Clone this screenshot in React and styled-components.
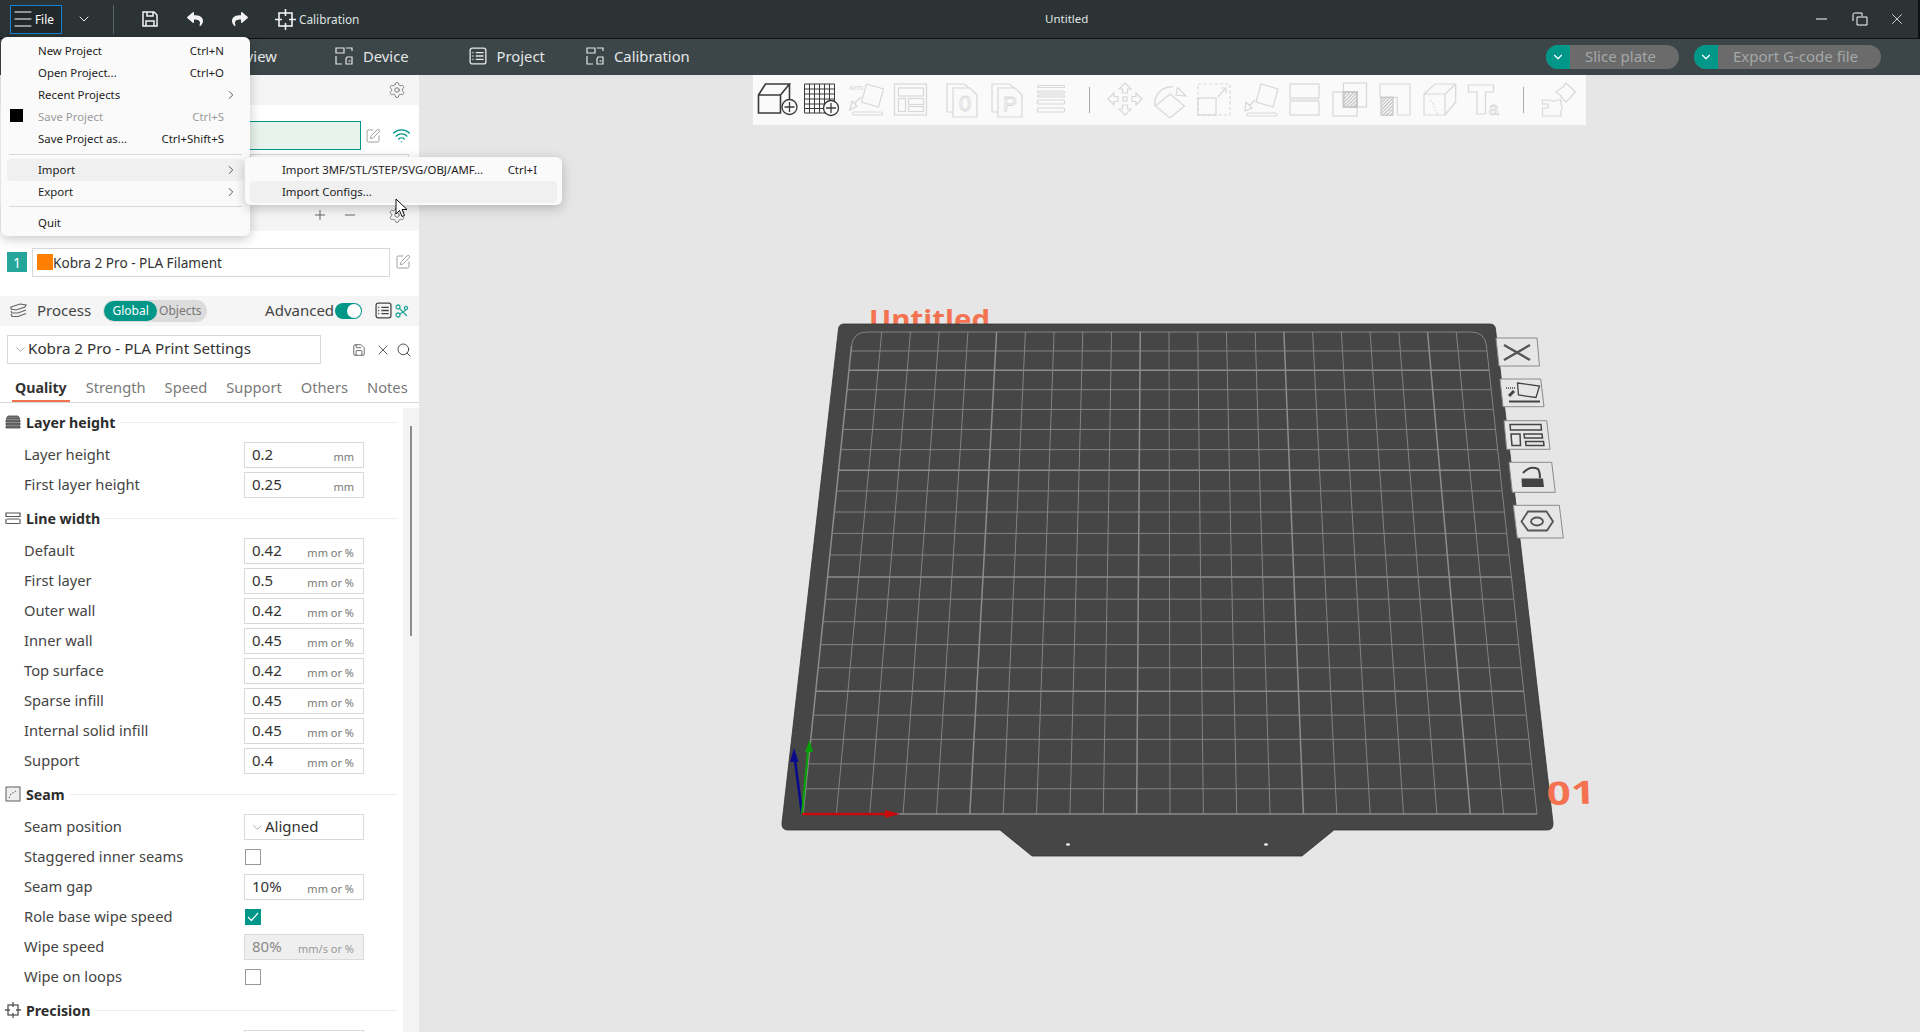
import React from 'react';
import styled, { createGlobalStyle } from 'styled-components';
import { ChevronDown, ChevronRight, Menu as MenuIcon, Minus, Plus, Save, Search, Settings, SquarePen, Wifi, X } from 'lucide-react';
import { FaReply, FaShare } from 'react-icons/fa';

const Global = createGlobalStyle`
  html, body { margin: 0; padding: 0; height: 100%; overflow: hidden; background: #e6e6e6; }
  * { box-sizing: border-box; }
  body { font-family: "Noto Sans", "Liberation Sans", sans-serif; }
`;

const Shell = styled.div`
  width: 1920px;
  height: 1032px;
  display: flex;
  flex-direction: column;
  position: relative;
  overflow: hidden;
`;

/* title bar */
const TitleBar = styled.div`
  height: 39px;
  flex: none;
  display: flex;
  align-items: center;
  background: #2b3335;
  border-bottom: 1px solid #0e1213;
  border-right: 2px solid #0e1213;
  color: #fff;
  padding-left: 10px;
  position: relative;
`;

const FileButton = styled.div`
  width: 52px;
  height: 29px;
  display: flex;
  align-items: center;
  background: #20282a;
  border: 1px solid #1283d8;
  font-size: 11.8px;
  color: #fff;
`;

const TitleIcon = styled.span`
  display: flex;
  align-items: center;
  justify-content: center;
  margin-left: ${p => p.$ml}px;
  color: #f2f2f2;
`;

const TitleSep = styled.div`
  width: 1px;
  height: 29px;
  background: #5a6366;
  margin-left: 21px;
`;

const CalibText = styled.span`
  font-size: 11.8px;
  color: #dfe2e3;
  margin-left: 3px;
`;

const DocTitle = styled.span`
  position: absolute;
  left: 1045px;
  font-size: 11.5px;
  color: #e3e6e6;
  padding-bottom: 2px;
`;

const WinControls = styled.div`
  margin-left: auto;
  display: flex;
  align-items: center;
  gap: 20px;
  padding-right: 12.5px;
`;

/* nav bar */
const NavBar = styled.div`
  height: 36px;
  flex: none;
  display: flex;
  align-items: center;
  background: #3c4547;
  padding: 0 0 2px 195px;
  color: #e4e7e7;
`;

const NavTab = styled.div`
  width: ${p => p.$w}px;
  display: flex;
  align-items: center;
  gap: 10px;
  font-size: 14.8px;
`;

const NavActions = styled.div`
  margin: 2px 0 0 auto;
  display: flex;
  gap: 15px;
  padding-right: 39px;
`;

const SplitButton = styled.div`
  width: ${p => p.$w}px;
  height: 24px;
  display: flex;
  align-items: center;
  border-radius: 12px;
  overflow: hidden;
  background: #6b6b6b;
  color: #a3a8aa;
  font-size: 15px;
`;

const SplitLabel = styled.span`
  padding-bottom: 3px;
`;

const SplitCaret = styled.span`
  width: 24px;
  height: 24px;
  flex: none;
  display: flex;
  align-items: center;
  justify-content: center;
  background: #009688;
  color: #fff;
  margin-right: 15px;
`;

/* body */
const Body = styled.div`
  flex: 1;
  display: flex;
  min-height: 0;
`;

const SidePanel = styled.div`
  width: 419px;
  flex: none;
  background: #fff;
  overflow: hidden;
  display: flex;
  flex-direction: column;
`;

const PanelHead = styled.div`
  height: ${p => p.$h}px;
  flex: none;
  display: flex;
  align-items: center;
  background: #f5f5f5;
  color: #444;
  font-size: 15px;
  padding: 0 0 ${p => p.$pb || 0}px ${p => p.$pl || 0}px;
`;

const HeadText = styled.span`
  margin-left: ${p => p.$ml}px;
  padding-bottom: 2px;
`;

const IconBtn = styled.span`
  display: flex;
  align-items: center;
  justify-content: center;
  margin-left: ${p => p.$ml || 0}px;
  height: ${p => (p.$tall ? '29px' : 'auto')};
  color: ${p => p.$color || '#666'};
`;

const PrinterBlock = styled.div`
  height: 100px;
  flex: none;
  padding: 16px 0 0 250px;
  display: flex;
  flex-direction: column;
`;

const PrinterRow = styled.div`
  display: flex;
  align-items: center;
  height: 29px;
`;

const PrinterField = styled.div`
  width: 110.5px;
  height: 29px;
  background: #e7f3ec;
  border: 1px solid #009688;
  border-left: none;
`;

const BedField = styled.div`
  width: 159px;
  height: 30px;
  margin-top: 4px;
  border: 1px solid #d9d9d9;
`;

const FilamentRow = styled.div`
  height: 65px;
  flex: none;
  display: flex;
  align-items: center;
  padding: 0 0 3px 7px;
`;

const SlotBadge = styled.span`
  width: 20px;
  height: 20px;
  background: #26a69a;
  color: #fff;
  font-size: 14px;
  display: flex;
  align-items: center;
  justify-content: center;
`;

const FilamentField = styled.div`
  width: 358px;
  height: 29px;
  margin-left: 5px;
  display: flex;
  align-items: center;
  border: 1px solid #d9d9d9;
  padding: 1px 0 0 4px;
  font-size: 13.6px;
  color: #333;
`;

const Swatch = styled.span`
  width: 16px;
  height: 16px;
  margin-top: -1px;
  background: #ff8000;
`;

const PillGroup = styled.div`
  width: 104px;
  height: 22px;
  margin-left: 12px;
  display: flex;
  align-items: center;
  border-radius: 11px;
  background: #dcdcdc;
  color: #777;
  font-size: 12px;
`;

const PillOn = styled.span`
  width: 53px;
  height: 20px;
  margin: 0 2px 0 1px;
  border-radius: 10px;
  background: #009688;
  color: #fff;
  display: flex;
  align-items: center;
  justify-content: center;
`;

const Toggle = styled.span`
  width: 27px;
  height: 16px;
  margin-left: 1px;
  border-radius: 8px;
  background: #009688;
  display: flex;
  justify-content: flex-end;
  align-items: center;
  padding-right: 1px;
`;

const Knob = styled.span`
  width: 14px;
  height: 14px;
  border-radius: 50%;
  background: #fff;
`;

const PresetRow = styled.div`
  height: 47px;
  flex: none;
  display: flex;
  align-items: flex-start;
  padding: 9px 0 0 7px;
`;

const PresetCombo = styled.div`
  width: 314px;
  height: 29px;
  display: flex;
  align-items: center;
  padding: 0 0 3px 5px;
  border: 1px solid #d9d9d9;
  font-size: 15.2px;
  color: #333;
  white-space: nowrap;
  svg { margin-top: 3px; }
`;

const TabStrip = styled.div`
  height: 30px;
  flex: none;
  display: flex;
  border-bottom: 1px solid #d8d8d8;
  padding-left: 12px;
`;

const Tab = styled.div`
  height: 29px;
  padding: 1px 3px 0;
  margin-right: 13px;
  display: flex;
  align-items: center;
  justify-content: center;
  font-size: ${p => (p.$on ? 14.2 : 14.7)}px;
  font-weight: ${p => (p.$on ? 700 : 400)};
  color: ${p => (p.$on ? '#333' : '#7a7a7a')};
  border-bottom: 2px solid ${p => (p.$on ? '#f4724f' : 'transparent')};
`;

const SettingsArea = styled.div`
  flex: 1;
  min-height: 0;
  display: flex;
`;

const SettingsList = styled.div`
  width: 403px;
  flex: none;
  padding-top: 1px;
`;

const ScrollTrack = styled.div`
  flex: 1;
  margin-top: 5px;
  background: #f4f4f4;
  padding: 18px 0 0 7px;
`;

const ScrollThumb = styled.div`
  width: 2px;
  height: 210px;
  background: #8c8c8c;
`;

const SectionHead = styled.div`
  height: 36px;
  display: flex;
  align-items: center;
  padding: 1px 6px 1px 5px;
  font-size: 14.2px;
  font-weight: 700;
  color: #2d2d2d;
  &::after {
    content: '';
    flex: 1;
    height: 1px;
    background: #ececec;
    margin-left: 5px;
  }
`;

const SectionIcon = styled.span`
  width: 21px;
  display: flex;
`;

const Row = styled.div`
  height: 30px;
  display: flex;
  align-items: center;
  padding-left: 24px;
  font-size: 14.7px;
  color: #444;
`;

const RowLabel = styled.span`
  width: 220px;
  flex: none;
  padding-bottom: 2px;
`;

const Field = styled.div`
  width: 120px;
  height: 26px;
  display: flex;
  align-items: center;
  justify-content: space-between;
  padding: 0 9px 2px 7px;
  border: 1px solid #d9d9d9;
  background: ${p => (p.$off ? '#efefef' : '#fff')};
  color: ${p => (p.$off ? '#8a8a8a' : '#333')};
  font-size: 15px;
`;

const Unit = styled.span`
  font-size: 11px;
  color: ${p => (p.$off ? '#999' : '#777')};
  padding-top: 4px;
`;

const Select = styled(Field)`
  justify-content: flex-start;
  padding-left: 5px;
  svg { margin-top: 2px; }
`;

const Check = styled.span`
  width: 16px;
  height: 16px;
  margin-left: 1px;
  display: flex;
  align-items: center;
  justify-content: center;
  background: ${p => (p.$on ? '#009688' : '#fff')};
  border: 1px solid ${p => (p.$on ? '#009688' : '#9a9a9a')};
  color: #fff;
`;

/* 3d view */
const Canvas = styled.div`
  flex: 1;
  position: relative;
  background: #e6e6e6;
  display: flex;
  justify-content: center;
  align-items: flex-start;
`;

const PlateView = styled.svg`
  position: absolute;
  inset: 0;
  width: 100%;
  height: 100%;
`;

const Toolbar = styled.div`
  position: relative;
  width: 833px;
  height: 50px;
  display: flex;
  align-items: center;
  padding-left: 2.5px;
  background: #fafafa;
`;

const ToolGroup = styled.div`
  display: flex;
  gap: ${p => p.$gap}px;
  margin-left: ${p => p.$ml || 0}px;
`;

const ToolSep = styled.div`
  width: 1.5px;
  height: 26px;
  background: #a9a9a9;
  margin: 0 13px 0 15.5px;
`;

const Tool = styled.svg`
  width: 44px;
  height: 36px;
  flex: none;
  fill: none;
  stroke: currentColor;
  stroke-width: ${p => (p.$on ? 1.3 : 1.2)};
  color: ${p => (p.$on ? '#3a3a3a' : '#d8d8d8')};
`;

/* menus */
const Popup = styled.div`
  position: absolute;
  left: ${p => p.$x}px;
  top: ${p => p.$y}px;
  width: ${p => p.$w}px;
  padding: ${p => p.$pad};
  background: #fafafa;
  border-radius: 6px;
  box-shadow: 0 3px 12px rgba(0, 0, 0, 0.22);
  color: #1c1c1c;
  font-size: 11.4px;
`;

const MenuItem = styled.div`
  height: 22px;
  margin: 0 ${p => p.$mx}px;
  padding: 0 0 2px ${p => p.$pl}px;
  display: flex;
  align-items: center;
  position: relative;
  border-radius: 4px;
  background: ${p => (p.$hot ? '#f0f0f0' : 'transparent')};
  color: ${p => (p.$off ? '#9a9a9a' : '#1c1c1c')};
`;

const Shortcut = styled.span`
  margin-left: auto;
  margin-right: ${p => p.$mr}px;
`;

const Caret = styled.span`
  position: absolute;
  right: 6px;
  top: 4px;
  display: flex;
  color: #333;
`;

const BlackMark = styled.span`
  position: absolute;
  left: 3px;
  top: 3px;
  width: 13px;
  height: 13px;
  background: #000;
`;

const MenuLine = styled.div`
  height: 1px;
  margin: ${p => p.$m};
  background: #d8d8d8;
`;

const Pointer = styled.svg`
  position: absolute;
  left: 395px;
  top: 198px;
  width: 14px;
  height: 21px;
`;

const IC = ({ children, w = 18, h = 18, vb }) => (
  <svg width={w} height={h} viewBox={vb || `0 0 ${w} ${h}`} fill="none" stroke="currentColor" strokeWidth="1.2">
    {children}
  </svg>
);

const CalibIcon = ({ w = 21 }) => (
  <IC w={w} h={w} vb="0 0 21 21">
    <rect x="4" y="4" width="13" height="13" strokeWidth="1.6" />
    <path d="M10.5 0v7M10.5 14v7M0 10.5h7M14 10.5h7" strokeWidth="1.6" />
  </IC>
);

const DeviceIcon = () => (
  <IC w={18} h={18}>
    <path d="M1 1h8v5H1zM11 1h6v3M1 9v8h6M12 10h5v7h-6v-5z" />
    <path d="M13.5 14h2" />
  </IC>
);

const ListIcon = ({ s = 16 }) => (
  <IC w={s} h={s} vb="0 0 16 16">
    <rect x="1" y="1" width="14" height="14" rx="2" />
    <path d="M6 5h7M6 8h7M6 11h7M3 5h1M3 8h1M3 11h1" />
  </IC>
);

const LayersIcon = () => (
  <IC w={17} h={15}>
    <path d="M1 4l9-3 6 1-1 2-9 3-5-1zM1 8l1 2h6l8-3M1 11l1 2.5h6l8-3" />
  </IC>
);

const TinyTools = () => (
  <svg width="14" height="14" viewBox="0 0 14 14" fill="none" stroke="#26a69a" strokeWidth="1.3">
    <circle cx="3" cy="3" r="2" />
    <circle cx="11" cy="4" r="1.6" />
    <circle cx="3" cy="11" r="2" />
    <path d="M5 5l7 7M11 6L5 10" />
  </svg>
);

const StackIcon = () => (
  <IC w={16} h={14}>
    <path d="M3 1h10l2 3H1zM1 5h14v2H1zM1 8h14v2H1zM1 11h14v2H1z" fill="#777" stroke="#444" strokeWidth="0.8" />
  </IC>
);

const WidthIcon = () => (
  <IC w={16} h={14}>
    <path d="M1 2h14v3.5H1zM2 8h12M2 12.5h12M1 8v5M15 8v5" stroke="#555" strokeWidth="1.2" />
  </IC>
);

const SeamIcon = () => (
  <IC w={16} h={16}>
    <rect x="1" y="1" width="14" height="14" fill="#eee" stroke="#777" />
    <path d="M4 12l2-4 5-3" stroke="#777" strokeDasharray="1.5 1.5" />
  </IC>
);

const PrecisionIcon = () => (
  <IC w={16} h={16}>
    <rect x="3" y="3" width="10" height="10" stroke="#555" strokeWidth="1.3" />
    <path d="M8 0v5M8 11v5M0 8h5M11 8h5" stroke="#555" strokeWidth="1.3" />
  </IC>
);

const sections = [
  {
    title: 'Layer height',
    Icon: StackIcon,
    rows: [
      { label: 'Layer height', value: '0.2', unit: 'mm' },
      { label: 'First layer height', value: '0.25', unit: 'mm' },
    ],
  },
  {
    title: 'Line width',
    Icon: WidthIcon,
    rows: [
      ['Default', '0.42'],
      ['First layer', '0.5'],
      ['Outer wall', '0.42'],
      ['Inner wall', '0.45'],
      ['Top surface', '0.42'],
      ['Sparse infill', '0.45'],
      ['Internal solid infill', '0.45'],
      ['Support', '0.4'],
    ].map(([label, value]) => ({ label, value, unit: 'mm or %' })),
  },
  {
    title: 'Seam',
    Icon: SeamIcon,
    rows: [
      { label: 'Seam position', select: 'Aligned' },
      { label: 'Staggered inner seams', check: false },
      { label: 'Seam gap', value: '10%', unit: 'mm or %' },
      { label: 'Role base wipe speed', check: true },
      { label: 'Wipe speed', value: '80%', unit: 'mm/s or %', off: true },
      { label: 'Wipe on loops', check: false },
    ],
  },
  { title: 'Precision', Icon: PrecisionIcon, rows: [] },
];

const SettingRow = ({ row }) => (
  <Row>
    <RowLabel>{row.label}</RowLabel>
    {row.select && (
      <Select>
        <ChevronDown size={15} color="#888" strokeWidth={1.1} />
        {row.select}
      </Select>
    )}
    {row.check !== undefined && <Check $on={row.check}>{row.check && <svg width="12" height="10" viewBox="0 0 12 10" fill="none" stroke="#fff" strokeWidth="1.2"><path d="M1 5l3.5 3.5L11 1" /></svg>}</Check>}
    {row.value && (
      <Field $off={row.off}>
        {row.value}
        <Unit $off={row.off}>{row.unit}</Unit>
      </Field>
    )}
  </Row>
);

/* toolbar drawings, one unit is one pixel */
const hatch = (
  <defs>
    <pattern id="hatch" width="2.5" height="2.5" patternUnits="userSpaceOnUse" patternTransform="rotate(45)">
      <rect width="1.1" height="2.5" fill="#bcbcbc" />
    </pattern>
  </defs>
);

const ToolIcons = {
  cube: (
    <>
      <path d="M2.5 13h22v18h-22zM2.5 13l7-11h24l-9 11M33.5 2v16" strokeWidth="1.6" />
      <circle cx="33.5" cy="25" r="7.5" fill="#fafafa" />
      <path d="M33.5 20v10M28.5 25h10" />
    </>
  ),
  grid: (
    <>
      <path d="M4.5 2h30v29h-30zM9.5 2v29M14.5 2v29M19.500 2v29M24.500 2v29M29.500 2v29M4.500 7h30M4.500 12h30M4.500 17h30M4.500 22h30M4.500 26.500h30" strokeWidth="1" />
      <circle cx="31" cy="26" r="7.500" fill="#fafafa" />
      <path d="M31 21v10M26 26h10" />
    </>
  ),
  auto: (
    <>
      <path d="M22.500 2l17 5-5 18-17-5z" />
      <rect x="8.500" y="30" width="30" height="3" rx="1.500" />
      <path d="M17 15l-6 6M6 28l2-9 5 5z" />
      <text x="5" y="8" fontSize="5" fill="currentColor" stroke="none" fontFamily="Liberation Sans" fontWeight="700">AUTO</text>
    </>
  ),
  layout: (
    <>
      <rect x="6.500" y="2" width="32" height="31" />
      <rect x="10.500" y="6" width="25" height="8" />
      <rect x="10.500" y="16.500" width="7" height="13" />
      <rect x="20.500" y="16.500" width="15" height="6" />
      <rect x="20.500" y="24.500" width="15" height="5" />
    </>
  ),
  plate0: (
    <>
      <path d="M13 30H7V2h17l5 4" />
      <path d="M13 6h17l7 7v22H13z" />
      <text x="25" y="29" fontSize="22" textAnchor="middle" fill="none" stroke="currentColor" strokeWidth="0.8" fontFamily="Liberation Sans">0</text>
    </>
  ),
  plateP: (
    <>
      <path d="M13 30H7V2h17l5 4" />
      <path d="M13 6h17l7 7v22H13z" />
      <text x="25" y="29" fontSize="21" textAnchor="middle" fill="none" stroke="currentColor" strokeWidth="0.8" fontFamily="Liberation Sans">P</text>
    </>
  ),
  lines: (
    <>
      <rect x="8.500" y="3.500" width="27" height="2" rx="1" />
      <rect x="8.500" y="9" width="27" height="2" rx="1" />
      <rect x="8.500" y="13" width="27" height="2" rx="1" />
      <rect x="8.500" y="18" width="27" height="4" rx="1" />
      <rect x="8.500" y="26" width="27" height="4" rx="1" />
    </>
  ),
  move: (
    <>
      <path d="M22 1l6 6h-3.500v4h-5V7H16zM22 33l6-6h-3.500v-4h-5v4H16zM5 17l6-6v3.500h4v5h-4V23zM39 17l-6-6v3.500h-4v5h4V23z" />
      <rect x="20" y="15" width="4" height="4" />
    </>
  ),
  rotate: (
    <>
      <path d="M22 12l14.500 12L22 36 7.500 24z" />
      <path d="M7 24C5.500 13 14 4 25 5" />
      <path d="M29.500 5.500L38 14l-10-1z" />
    </>
  ),
  scale: (
    <>
      <rect x="5" y="2" width="32" height="31" strokeDasharray="3 2.500" />
      <rect x="5" y="16" width="18" height="17" />
      <path d="M25 15l7-8M28 6h5v5" />
    </>
  ),
  layOn: (
    <>
      <path d="M23 2l17 5-5 18-17-5z" />
      <rect x="9" y="31" width="30" height="3" rx="1.500" />
      <path d="M17 18l-6 6M7 29l1-9 6 6z" />
    </>
  ),
  cut: (
    <>
      <rect x="7" y="2" width="29" height="14" />
      <rect x="7" y="19" width="29" height="14" />
      <path d="M7 17.500h29" strokeDasharray="1.500 1.500" />
    </>
  ),
  bool: (
    <>
      <rect x="15.500" y="1" width="23" height="24" />
      <rect x="5" y="10" width="24" height="24" />
      <rect x="15.500" y="10" width="13.500" height="15" fill="url(#hatch)" strokeWidth="2" stroke="#c8c8c8" />
    </>
  ),
  support: (
    <>
      <path d="M7 2h30v31H24.300V15.300H7z" />
      <rect x="8" y="15.300" width="12" height="18" fill="url(#hatch)" stroke="#c8c8c8" />
    </>
  ),
  seam: (
    <>
      <path d="M6 12h21v21H6zM6 12L17 2h20.700L27 12M37.700 2v18L27 33" />
      <path d="M13 18l3 7 4 8" strokeDasharray="1.500 2" />
    </>
  ),
  text: (
    <>
      <path d="M5.500 3h25v7h-8v22h-8.500V10h-8.500z" />
      <text x="25.500" y="33" fontSize="18" fill="none" stroke="currentColor" strokeWidth="0.8" fontFamily="Liberation Sans">a</text>
    </>
  ),
  puzzle: (
    <>
      <path d="M5.500 18h8a3 3 0 0 0 5 0h5.500v5a3 3 0 0 1 0 5v6H5.500v-8h5a3 3 0 0 0 0-4h-5z" />
      <path d="M29 1l9.500 9L29 20l-5-5a3 3 0 0 0-3-3l-2-2 5-4a3 3 0 0 0 3-3z" />
    </>
  ),
};

const tool = (name, on) => (
  <Tool key={name} $on={on} viewBox="0 0 44 36">
    {ToolIcons[name]}
  </Tool>
);

/* bed drawing: real page coordinates, perspective taken from the picture */
const rowY = t => (368.9 * t + 332) / (1 - 0.139 * t);
const leftX = y => 853 - (50 * (y - 332)) / 482;
const rightX = y => 1485 + (52 * (y - 332)) / 482;

const Bed = () => {
  const divisions = Array.from({ length: 23 }, (_, i) => i);
  return (
    <PlateView viewBox="419 75 1501 957">
      <text x="869" y="329" fontSize="27" fontWeight="700" fill="#f4724f" fontFamily="Open Sans" textLength="121" lengthAdjust="spacingAndGlyphs">Untitled</text>
      <path d="M844 324H1490Q1495 324 1495.500 329L1553 823Q1553.500 830 1547 830H1334L1302 856H1032L1000 830H788Q781.500 830 782 823L838.500 329Q839 324 844 324Z" fill="#454645" stroke="#333" strokeWidth="0.8" />
      {divisions.map(i => {
        const u = i / 22;
        const y = rowY(i / 22);
        const heavy = i % 5 === 0;
        const heavyRow = (22 - i) % 5 === 0;
        const insetTop = i === 0 || i === 22 ? 14 : 0;
        return (
          <g key={i}>
            <line x1={853 + 632 * u - (insetTop ? (i === 0 ? 1.5 : -1.5) : 0)} y1={332 + insetTop} x2={803 + 734 * u} y2={814} stroke={heavy ? '#8c8c8c' : '#838383'} strokeWidth={heavy ? 1.5 : 1} />
            <line x1={leftX(y) + (i === 0 ? 14 : 0)} y1={y} x2={rightX(y) - (i === 0 ? 14 : 0)} y2={y} stroke={heavyRow ? '#8c8c8c' : '#838383'} strokeWidth={heavyRow ? 1.5 : 1} />
          </g>
        );
      })}
      <path d="M851.500 346Q853 332 867 332M1471 332Q1485 332 1486.500 346" fill="none" stroke="#838383" />
      <ellipse cx="1068" cy="844.500" rx="2" ry="1.200" fill="#f4f4f4" />
      <ellipse cx="1266" cy="844.500" rx="2" ry="1.200" fill="#f4f4f4" />
      <path d="M802 814L795 760" stroke="#0a0a8c" strokeWidth="2.600" />
      <path d="M794 748L798.500 762H790z" fill="#0a0a8c" />
      <path d="M802 814L808 752" stroke="#0aa00a" strokeWidth="2.200" />
      <path d="M809.500 740L813 752H805z" fill="#0aa00a" />
      <path d="M802 814H888" stroke="#c80a0a" strokeWidth="2.600" />
      <path d="M900 814L885 810V818z" fill="#c80a0a" />
      <g transform="translate(1547 805) rotate(-2) scale(1.32 1.0)">
        <text x="0" y="0" fontSize="32" fontWeight="700" fill="#f4724f" fontFamily="Open Sans">01</text>
      </g>
      <g fill="#e6e6e6" stroke="#8a8a8a" strokeWidth="1" strokeLinejoin="round">
        <path d="M1496 338H1537L1539.500 366H1499z" />
        <path d="M1500 379H1540.700L1544 406.700H1503z" />
        <path d="M1504 420.700H1546.700L1550 449.300H1506.700z" />
        <path d="M1509 462.300H1551.700L1555.300 492.300H1512.300z" />
        <path d="M1513.300 505.300H1559.300L1563.300 538H1517.300z" />
      </g>
      <path d="M1504 345L1530 360M1530 345L1504 360" stroke="#555" strokeWidth="2.400" />
      <g fill="none" stroke="#444" strokeWidth="1.300">
        <path d="M1517.500 383L1539.500 386L1536 397.500L1518.500 395z" />
        <path d="M1509 401.500H1540" strokeWidth="2" />
        <path d="M1506 388H1516" strokeWidth="1.500" strokeDasharray="1 1" />
        <path d="M1509 396L1514 391" strokeWidth="3" />
      </g>
      <g fill="none" stroke="#444" strokeWidth="1.500">
        <path d="M1510 424.500H1541L1541.500 430H1510.500z" />
        <path d="M1511 434H1520L1520.500 445.500H1512z" />
        <path d="M1524 434H1542L1542.500 438H1524.500z" />
        <path d="M1525.500 441.500H1543.500L1544 445.500H1526z" />
      </g>
      <path d="M1521.500 478.500H1543L1544 487H1522z" fill="#444" />
      <path d="M1523 473Q1530 465 1538 469Q1540 472 1540 478" fill="none" stroke="#444" strokeWidth="2" />
      <path d="M1521.500 521.500L1528 511.500H1546.500L1553 521.500L1547 530.500H1528z" fill="none" stroke="#555" strokeWidth="1.800" />
      <ellipse cx="1537" cy="521.500" rx="6" ry="4" fill="none" stroke="#555" strokeWidth="1.800" />
    </PlateView>
  );
};

const App = () => (
  <Shell>
    <Global />
    <TitleBar>
      <FileButton>
        <MenuIcon size={24} strokeWidth={1.1} />
        File
      </FileButton>
      <TitleIcon $ml={14}><ChevronDown size={16} strokeWidth={1.5} /></TitleIcon>
      <TitleSep />
      <TitleIcon $ml={27}>
        <IC w={18} h={18}>
          <path d="M2 2h11l3 3v11H2zM6 2v4h6V2M5 16v-5h8v5" strokeWidth="1.500" />
        </IC>
      </TitleIcon>
      <TitleIcon $ml={28}><FaReply size={16} /></TitleIcon>
      <TitleIcon $ml={29}><FaShare size={16} /></TitleIcon>
      <TitleIcon $ml={27}><CalibIcon /></TitleIcon>
      <CalibText>Calibration</CalibText>
      <DocTitle>Untitled</DocTitle>
      <WinControls>
        <svg width="15.500" height="2" viewBox="0 0 15.500 2"><path d="M0 1h11" stroke="#fff" /></svg>
        <IC w={16} h={14}><path d="M1 9V2.500Q1 1 2.500 1H10V4M5 5h10v8H5z" strokeWidth="1" /></IC>
        <X size={18} strokeWidth={1} color="#fff" />
      </WinControls>
    </TitleBar>

    <NavBar>
      <NavTab $w={140}><DeviceIcon />Preview</NavTab>
      <NavTab $w={133.5}><DeviceIcon />Device</NavTab>
      <NavTab $w={117.5}><ListIcon s={18} />Project</NavTab>
      <NavTab $w={140}><DeviceIcon />Calibration</NavTab>
      <NavActions>
        <SplitButton $w={133}>
          <SplitCaret><ChevronDown size={14} strokeWidth={2} /></SplitCaret>
          <SplitLabel>Slice plate</SplitLabel>
        </SplitButton>
        <SplitButton $w={187}>
          <SplitCaret><ChevronDown size={14} strokeWidth={2} /></SplitCaret>
          <SplitLabel>Export G-code file</SplitLabel>
        </SplitButton>
      </NavActions>
    </NavBar>

    <Body>
      <SidePanel>
        <PanelHead $h={30} $pl={388}>
          <IconBtn><Settings size={18} strokeWidth={1.1} /></IconBtn>
        </PanelHead>
        <PrinterBlock>
          <PrinterRow>
            <PrinterField />
            <IconBtn $ml={4}><SquarePen size={16} strokeWidth={1.2} color="#888" /></IconBtn>
            <IconBtn $ml={11} $color="#009688"><Wifi size={19} strokeWidth={1.6} /></IconBtn>
          </PrinterRow>
          <BedField />
        </PrinterBlock>
        <PanelHead $h={26} $pl={312} $pb={6}>
          <IconBtn $color="#555"><Plus size={16} strokeWidth={1.3} /></IconBtn>
          <IconBtn $ml={14} $color="#555"><Minus size={16} strokeWidth={1.3} /></IconBtn>
          <IconBtn $ml={30}><Settings size={18} strokeWidth={1.1} /></IconBtn>
        </PanelHead>
        <FilamentRow>
          <SlotBadge>1</SlotBadge>
          <FilamentField>
            <Swatch />
            Kobra 2 Pro - PLA Filament
          </FilamentField>
          <IconBtn $ml={5}><SquarePen size={16} strokeWidth={1.2} color="#888" /></IconBtn>
        </FilamentRow>
        <PanelHead $h={30} $pl={10} $pb={1}>
          <IconBtn $color="#666"><LayersIcon /></IconBtn>
          <HeadText $ml={10}>Process</HeadText>
          <PillGroup>
            <PillOn>Global</PillOn>
            Objects
          </PillGroup>
          <HeadText $ml={58}>Advanced</HeadText>
          <Toggle><Knob /></Toggle>
          <IconBtn $ml={13} $color="#444"><ListIcon s={17} /></IconBtn>
          <IconBtn $ml={3}><TinyTools /></IconBtn>
        </PanelHead>
        <PresetRow>
          <PresetCombo>
            <ChevronDown size={15} color="#888" strokeWidth={1.1} />
            Kobra 2 Pro - PLA Print Settings
          </PresetCombo>
          <IconBtn $ml={31} $tall $color="#333"><Save size={14} strokeWidth={1.2} /></IconBtn>
          <IconBtn $ml={9} $tall $color="#333"><X size={16} strokeWidth={1.2} /></IconBtn>
          <IconBtn $ml={5} $tall $color="#333"><Search size={16} strokeWidth={1.3} /></IconBtn>
        </PresetRow>
        <TabStrip>
          <Tab $on>Quality</Tab>
          <Tab>Strength</Tab>
          <Tab>Speed</Tab>
          <Tab>Support</Tab>
          <Tab>Others</Tab>
          <Tab>Notes</Tab>
        </TabStrip>
        <SettingsArea>
          <SettingsList>
            {sections.map(({ title, Icon, rows }) => (
              <React.Fragment key={title}>
                <SectionHead>
                  <SectionIcon><Icon /></SectionIcon>
                  {title}
                </SectionHead>
                {rows.map(row => <SettingRow key={row.label} row={row} />)}
              </React.Fragment>
            ))}
            <Row>
              <RowLabel />
              <Field />
            </Row>
          </SettingsList>
          <ScrollTrack><ScrollThumb /></ScrollTrack>
        </SettingsArea>
      </SidePanel>

      <Canvas>
        <Bed />
        <Toolbar>
          <svg width="0" height="0" style={{ position: 'absolute' }}>{hatch}</svg>
          <ToolGroup $gap={0}>{tool('cube', true)}{tool('grid', true)}{tool('auto')}{tool('layout')}</ToolGroup>
          <ToolGroup $gap={0.5} $ml={8.5}>{tool('plate0')}{tool('plateP')}{tool('lines')}</ToolGroup>
          <ToolSep />
          <ToolGroup $gap={1}>
            {tool('move')}{tool('rotate')}{tool('scale')}{tool('layOn')}{tool('cut')}{tool('bool')}{tool('support')}{tool('seam')}{tool('text')}
          </ToolGroup>
          <ToolSep />
          {tool('puzzle')}
        </Toolbar>
      </Canvas>
    </Body>

    <Popup $x={1} $y={37} $w={249} $pad="3px 0 2px">
      <MenuItem $mx={6} $pl={31}>New Project<Shortcut $mr={20}>Ctrl+N</Shortcut></MenuItem>
      <MenuItem $mx={6} $pl={31}>Open Project...<Shortcut $mr={20}>Ctrl+O</Shortcut></MenuItem>
      <MenuItem $mx={6} $pl={31}>Recent Projects<Caret><ChevronRight size={14} strokeWidth={1.4} /></Caret></MenuItem>
      <MenuItem $mx={6} $pl={31} $off><BlackMark />Save Project<Shortcut $mr={20}>Ctrl+S</Shortcut></MenuItem>
      <MenuItem $mx={6} $pl={31}>Save Project as...<Shortcut $mr={20}>Ctrl+Shift+S</Shortcut></MenuItem>
      <MenuLine $m="4px 8px" />
      <MenuItem $mx={6} $pl={31} $hot>Import<Caret><ChevronRight size={14} strokeWidth={1.4} /></Caret></MenuItem>
      <MenuItem $mx={6} $pl={31}>Export<Caret><ChevronRight size={14} strokeWidth={1.4} /></Caret></MenuItem>
      <MenuLine $m="3px 8px 5px" />
      <MenuItem $mx={6} $pl={31}>Quit</MenuItem>
    </Popup>

    <Popup $x={245} $y={157} $w={317} $pad="2px 0">
      <MenuItem $mx={5} $pl={32}>Import 3MF/STL/STEP/SVG/OBJ/AMF...<Shortcut $mr={20}>Ctrl+I</Shortcut></MenuItem>
      <MenuItem $mx={5} $pl={32} $hot>Import Configs...</MenuItem>
    </Popup>

    <Pointer viewBox="0 0 14 21">
      <path d="M1 1v15l3.500-3.500 2.500 6 2.500-1-2.500-6h5z" fill="#fff" stroke="#111" strokeWidth="1" />
    </Pointer>
  </Shell>
);

export default App;
